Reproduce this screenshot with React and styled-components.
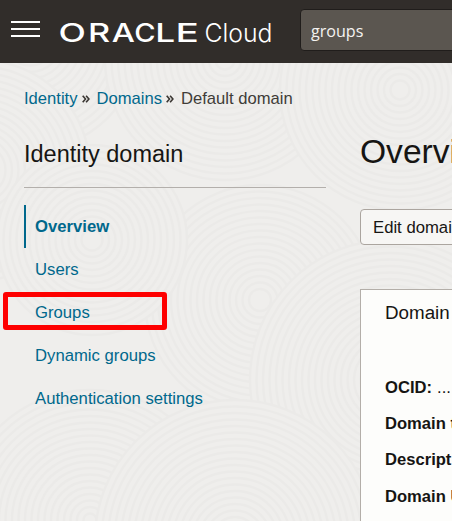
import React from "react";
import styled, { createGlobalStyle, css } from "styled-components";

const GlobalStyle = createGlobalStyle`
  * { box-sizing: border-box; }
  body { margin: 0; overflow: hidden; background: #efeeec; font-family: "Liberation Sans", Arial, sans-serif; }
`;

const Page = styled.div`
  position: relative;
  width: 452px;
  height: 521px;
  overflow: hidden;
  display: flex;
  flex-direction: column;
  background: #efeeec;
  color: #161513;
`;

const Texture = styled.svg`
  position: absolute;
  inset: 0;
`;

const Header = styled.header`
  position: relative;
  flex: none;
  height: 63px;
  display: flex;
  align-items: flex-start;
  background: #312d2a;
`;

const MenuButton = styled.button`
  margin: 21px 0 0 11px;
  padding: 0;
  width: 29px;
  height: 16px;
  border: 0;
  background: none;
  display: flex;
  flex-direction: column;
  justify-content: space-between;
`;

const MenuBar = styled.span`
  height: 2px;
  width: 29px;
  background: #fff;
`;

const Logo = styled.svg`
  margin: 14px 0 0 18px;
  width: 216px;
  height: 36px;
  flex: none;
  fill: #fff;
`;

const Search = styled.div`
  margin: 9px 0 0 26px;
  flex: none;
  width: 190px;
  height: 42px;
  padding: 0 9px 0 10px;
  border: 1px solid #201d1b;
  border-radius: 4px;
  background: #5b5650;
  color: #f5f3f1;
  font: 16.1px/42px "Open Sans", sans-serif;
`;

const Body = styled.div`
  position: relative;
  flex: 1;
  min-height: 0;
  padding-left: 24px;
`;

const Breadcrumbs = styled.nav`
  display: flex;
  height: 20px;
  margin-top: 26px;
  font-size: 16.6px;
  line-height: 20px;
  color: #403c38;
  white-space: nowrap;
`;

const Link = styled.a`
  color: #00688c;
`;

const Chevrons = styled.svg`
  width: 8px;
  height: 8px;
  margin: 6px ${(p) => p.$after}px 0 4px;
  fill: none;
  stroke: #3a3632;
  stroke-width: 1.6;
`;

const Columns = styled.div`
  display: flex;
`;

const Sidebar = styled.aside`
  width: 302px;
  margin-right: 34px;
  flex: none;
`;

const SideTitle = styled.h2`
  margin: 0;
  padding-top: 31px;
  height: 79px;
  font-size: 23.5px;
  line-height: 28px;
  font-weight: 400;
  border-bottom: 1px solid #b3afab;
`;

const NavList = styled.div`
  margin-top: 17px;
`;

const NavItem = styled.a`
  position: relative;
  display: block;
  height: 43px;
  padding-left: 9px;
  border-left: 2px solid transparent;
  font-size: 16.7px;
  line-height: 43px;
  color: #00688c;
  ${(p) =>
    p.$active &&
    css`
      font-weight: 700;
      border-left-color: #00688c;
    `}
`;

const Highlight = styled.span`
  position: absolute;
  left: -23px;
  top: 1px;
  width: 164px;
  height: 38px;
  border: 5px solid #fe0000;
  border-radius: 3px;
`;

const Main = styled.main`
  width: 400px;
  flex: none;
`;

const Title = styled.h1`
  margin: 21px 0 0;
  height: 44px;
  font-size: 33.6px;
  line-height: 44px;
  font-weight: 400;
`;

const Button = styled.button`
  display: block;
  margin: 35px 0 0;
  width: 160px;
  height: 36px;
  padding: 0 12px;
  text-align: left;
  border: 1px solid #aba59f;
  border-radius: 4px;
  background: #f7f6f4;
  color: #161513;
  font: 16.7px/33px "Liberation Sans", Arial, sans-serif;
`;

const Panel = styled.section`
  margin-top: 44px;
  height: 300px;
  padding: 11px 24px;
  border: 1px solid #b3aea8;
  background: #fdfdfb;
`;

const PanelTitle = styled.h3`
  margin: 0;
  font-size: 18.8px;
  line-height: 24px;
  font-weight: 400;
`;

const Details = styled.dl`
  margin: 45px 0 0;
`;

const Detail = styled.div`
  height: 36.2px;
  display: flex;
  gap: 5px;
  font-size: 16.6px;
  line-height: 36px;
  white-space: nowrap;
  dt { font-weight: 700; }
  dd { margin: 0; }
`;

const swirls = [
  { x: 30, y: 40, r: 110 },
  { x: 225, y: 60, r: 120 },
  { x: -20, y: 170, r: 110 },
  { x: 400, y: 90, r: 120 },
  { x: 260, y: 300, r: 115 },
  { x: 390, y: 380, r: 140 },
  { x: 92, y: 240, r: 95 },
  { x: 90, y: 520, r: 130 },
  { x: 235, y: 540, r: 140 },
];

const rings = (r) => Array.from({ length: Math.floor(r / 6.5) }, (_, i) => r - i * 6.5);

const letters = [
  { c: "O", x: -1.6, sx: 1.4 },
  { c: "R", x: 27.9, sx: 1.34 },
  { c: "A", x: 51.8, sx: 1.28 },
  { c: "C", x: 74.2, sx: 1.14 },
  { c: "L", x: 95.2, sx: 1.38 },
  { c: "E", x: 115.5, sx: 1.52 },
];

const details = [
  ["OCID:", "..."],
  ["Domain type:", ""],
  ["Description:", ""],
  ["Domain URL:", ""],
];

const sections = ["Overview", "Users", "Groups", "Dynamic groups", "Authentication settings"];

function Separator({ after }) {
  return (
    <Chevrons $after={after} viewBox="0 0 8 8">
      <path d="M.7 .7 3.5 4 .7 7.3M4.1 .7 6.9 4 4.1 7.3" />
    </Chevrons>
  );
}

export default function App() {
  return (
    <>
      <GlobalStyle />
      <Page>
        <Texture width="452" height="521" aria-hidden="true">
          {swirls.map((s) => (
            <g key={`${s.x}-${s.y}`} stroke="#ebeae8" strokeWidth="2.4">
              {rings(s.r).map((r) => (
                <circle key={r} cx={s.x} cy={s.y} r={r} fill="#efeeec" />
              ))}
            </g>
          ))}
        </Texture>
        <Header>
          <MenuButton aria-label="Menu">
            <MenuBar />
            <MenuBar />
            <MenuBar />
          </MenuButton>
          <Logo viewBox="0 0 216 36">
            {letters.map((l) => (
              <text
                key={l.c}
                transform={`translate(${l.x + 2} 27.5) scale(${l.sx} 1)`}
                fontFamily="Inter, sans-serif"
                fontWeight="500"
                fontSize="25.5"
              >
                {l.c}
              </text>
            ))}
            <text x="146.5" y="27.5" fontFamily="Inter, sans-serif" fontWeight="300" fontSize="25" textLength="68" lengthAdjust="spacingAndGlyphs">
              Cloud
            </text>
          </Logo>
          <Search>groups</Search>
        </Header>
        <Body>
          <Breadcrumbs>
            <Link>Identity</Link>
            <Separator after={7} />
            <Link>Domains</Link>
            <Separator after={7} />
            <span>Default domain</span>
          </Breadcrumbs>
          <Columns>
            <Sidebar>
              <SideTitle>Identity domain</SideTitle>
              <NavList>
                {sections.map((name) => (
                  <NavItem key={name} $active={name === "Overview"}>
                    {name}
                    {name === "Groups" && <Highlight />}
                  </NavItem>
                ))}
              </NavList>
            </Sidebar>
            <Main>
              <Title>Overview</Title>
              <Button>Edit domain</Button>
              <Panel>
                <PanelTitle>Domain information</PanelTitle>
                <Details>
                  {details.map(([term, value]) => (
                    <Detail key={term}>
                      <dt>{term}</dt>
                      <dd>{value}</dd>
                    </Detail>
                  ))}
                </Details>
              </Panel>
            </Main>
          </Columns>
        </Body>
      </Page>
    </>
  );
}
